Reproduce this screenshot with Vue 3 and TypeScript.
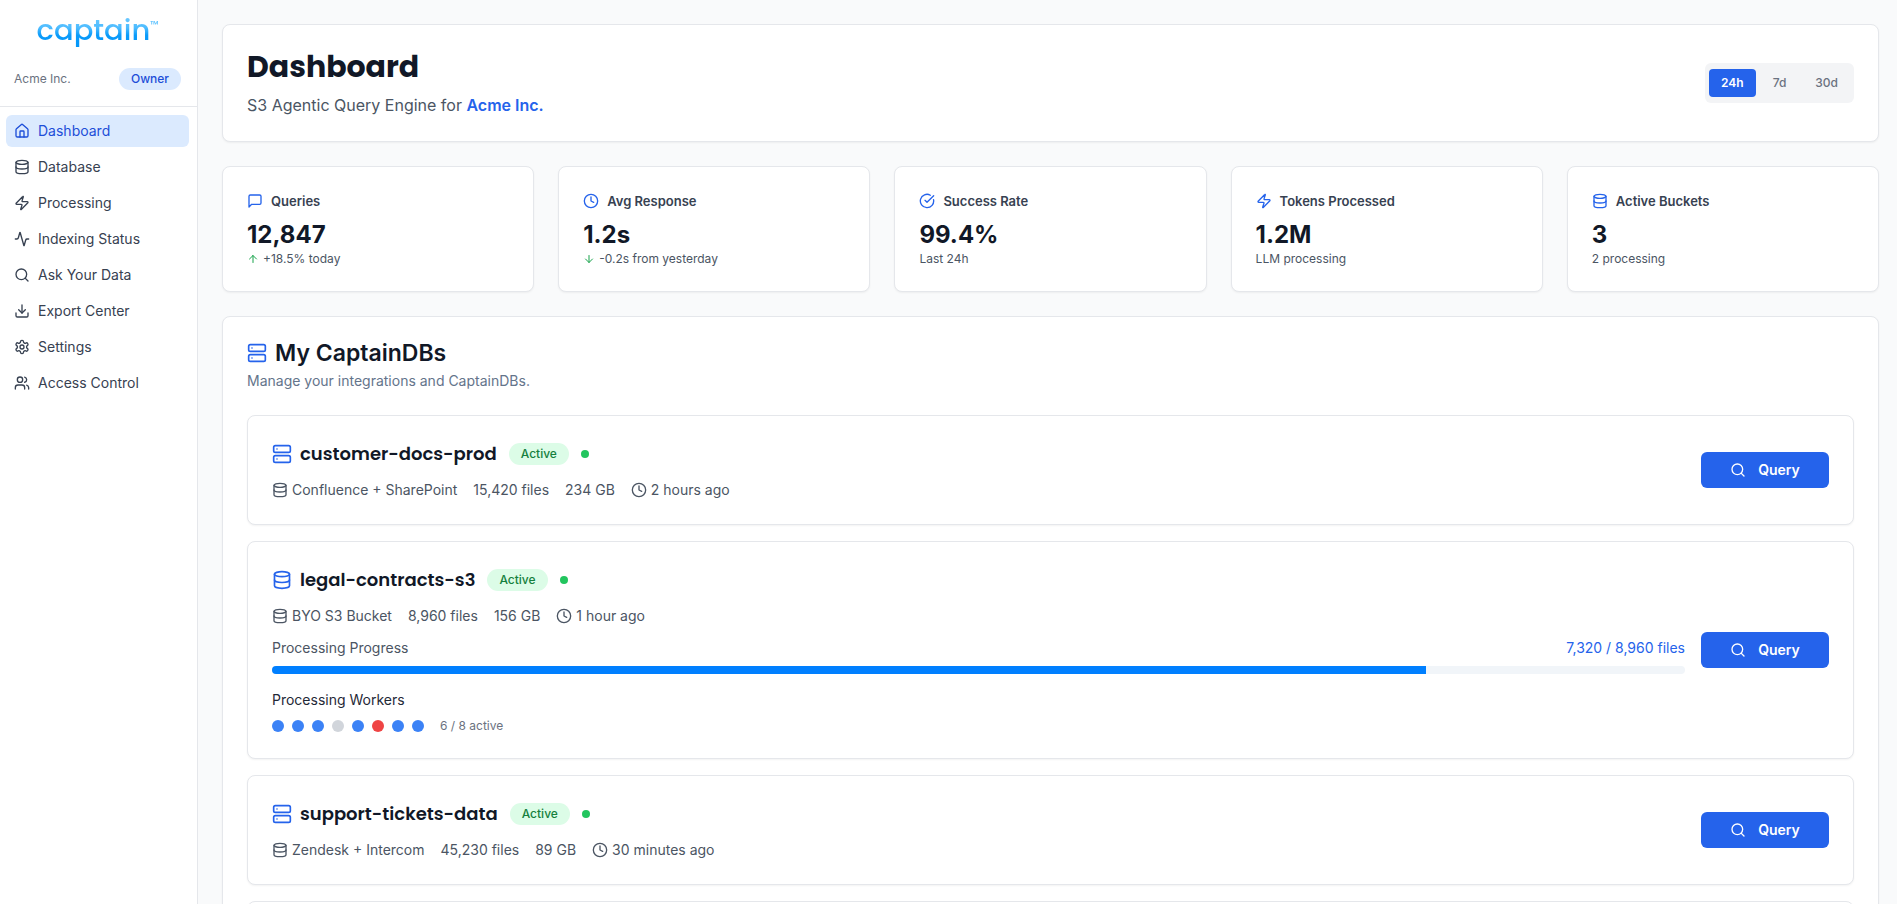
<script setup lang="ts">
import { ref } from 'vue'

type IconName =
  | 'home' | 'database' | 'zap' | 'activity' | 'search' | 'download' | 'settings'
  | 'users' | 'message' | 'clock' | 'check' | 'server' | 'up' | 'down'

const icons: Record<IconName, string[]> = {
  home: [
    'M15 21v-8a1 1 0 0 0-1-1h-4a1 1 0 0 0-1 1v8',
    'M3 10a2 2 0 0 1 .709-1.528l7-5.999a2 2 0 0 1 2.582 0l7 5.999A2 2 0 0 1 21 10v9a2 2 0 0 1-2 2H5a2 2 0 0 1-2-2z',
  ],
  database: [
    'M3 5a9 3 0 1 0 18 0a9 3 0 1 0-18 0',
    'M3 5V19A9 3 0 0 0 21 19V5',
    'M3 12A9 3 0 0 0 21 12',
  ],
  zap: [
    'M4 14a1 1 0 0 1-.78-1.63l9.9-10.2a.5.5 0 0 1 .86.46l-1.92 6.02A1 1 0 0 0 13 10h7a1 1 0 0 1 .78 1.63l-9.9 10.2a.5.5 0 0 1-.86-.46l1.92-6.02A1 1 0 0 0 11 14z',
  ],
  activity: [
    'M22 12h-2.48a2 2 0 0 0-1.93 1.46l-2.35 8.36a.25.25 0 0 1-.48 0L9.24 2.18a.25.25 0 0 0-.48 0l-2.35 8.36A2 2 0 0 1 4.49 12H2',
  ],
  search: ['M3 11a8 8 0 1 0 16 0a8 8 0 1 0-16 0', 'm21 21-4.3-4.3'],
  download: ['M12 15V3', 'M21 15v4a2 2 0 0 1-2 2H5a2 2 0 0 1-2-2v-4', 'm7 10 5 5 5-5'],
  settings: [
    'M12.22 2h-.44a2 2 0 0 0-2 2v.18a2 2 0 0 1-1 1.73l-.43.25a2 2 0 0 1-2 0l-.15-.08a2 2 0 0 0-2.73.73l-.22.38a2 2 0 0 0 .73 2.73l.15.1a2 2 0 0 1 1 1.72v.51a2 2 0 0 1-1 1.74l-.15.09a2 2 0 0 0-.73 2.73l.22.38a2 2 0 0 0 2.73.73l.15-.08a2 2 0 0 1 2 0l.43.25a2 2 0 0 1 1 1.73V20a2 2 0 0 0 2 2h.44a2 2 0 0 0 2-2v-.18a2 2 0 0 1 1-1.73l.43-.25a2 2 0 0 1 2 0l.15.08a2 2 0 0 0 2.73-.73l.22-.39a2 2 0 0 0-.73-2.73l-.15-.08a2 2 0 0 1-1-1.74v-.5a2 2 0 0 1 1-1.74l.15-.09a2 2 0 0 0 .73-2.73l-.22-.38a2 2 0 0 0-2.73-.73l-.15.08a2 2 0 0 1-2 0l-.43-.25a2 2 0 0 1-1-1.73V4a2 2 0 0 0-2-2z',
    'M9 12a3 3 0 1 0 6 0a3 3 0 1 0-6 0',
  ],
  users: [
    'M16 21v-2a4 4 0 0 0-4-4H6a4 4 0 0 0-4 4v2',
    'M5 7a4 4 0 1 0 8 0a4 4 0 1 0-8 0',
    'M22 21v-2a4 4 0 0 0-3-3.87',
    'M16 3.13a4 4 0 0 1 0 7.75',
  ],
  message: ['M21 15a2 2 0 0 1-2 2H7l-4 4V5a2 2 0 0 1 2-2h14a2 2 0 0 1 2 2z'],
  clock: ['M2 12a10 10 0 1 0 20 0a10 10 0 1 0-20 0', 'M12 6v6l4 2'],
  check: ['M21.801 10A10 10 0 1 1 17 3.335', 'm9 11 3 3L22 4'],
  server: [
    'M4 2h16a2 2 0 0 1 2 2v4a2 2 0 0 1-2 2H4a2 2 0 0 1-2-2V4a2 2 0 0 1 2-2z',
    'M4 14h16a2 2 0 0 1 2 2v4a2 2 0 0 1-2 2H4a2 2 0 0 1-2-2v-4a2 2 0 0 1 2-2z',
    'M6 6h.01',
    'M6 18h.01',
  ],
  up: ['m5 12 7-7 7 7', 'M12 19V5'],
  down: ['M12 5v14', 'm19 12-7 7-7-7'],
}

const nav: { label: string; icon: IconName }[] = [
  { label: 'Dashboard', icon: 'home' },
  { label: 'Database', icon: 'database' },
  { label: 'Processing', icon: 'zap' },
  { label: 'Indexing Status', icon: 'activity' },
  { label: 'Ask Your Data', icon: 'search' },
  { label: 'Export Center', icon: 'download' },
  { label: 'Settings', icon: 'settings' },
  { label: 'Access Control', icon: 'users' },
]
const current = ref('Dashboard')

const ranges = ['24h', '7d', '30d']
const range = ref('24h')

const stats: { label: string; icon: IconName; value: string; note: string; trend?: IconName }[] = [
  { label: 'Queries', icon: 'message', value: '12,847', note: '+18.5% today', trend: 'up' },
  { label: 'Avg Response', icon: 'clock', value: '1.2s', note: '-0.2s from yesterday', trend: 'down' },
  { label: 'Success Rate', icon: 'check', value: '99.4%', note: 'Last 24h' },
  { label: 'Tokens Processed', icon: 'zap', value: '1.2M', note: 'LLM processing' },
  { label: 'Active Buckets', icon: 'database', value: '3', note: '2 processing' },
]

type Worker = 'busy' | 'idle' | 'failed'
interface Db {
  name: string
  icon: IconName
  source: string
  files: string
  size: string
  updated: string
  progress?: { done: number; total: number; workers: Worker[] }
}

const dbs: Db[] = [
  { name: 'customer-docs-prod', icon: 'server', source: 'Confluence + SharePoint', files: '15,420 files', size: '234 GB', updated: '2 hours ago' },
  {
    name: 'legal-contracts-s3', icon: 'database', source: 'BYO S3 Bucket', files: '8,960 files', size: '156 GB', updated: '1 hour ago',
    progress: { done: 7320, total: 8960, workers: ['busy', 'busy', 'busy', 'idle', 'busy', 'failed', 'busy', 'busy'] },
  },
  { name: 'support-tickets-data', icon: 'server', source: 'Zendesk + Intercom', files: '45,230 files', size: '89 GB', updated: '30 minutes ago' },
]

const fmt = (n: number) => n.toLocaleString('en-US')
const busy = (w: Worker[]) => w.filter((s) => s === 'busy').length
</script>

<template>
  <div class="layout">
    <aside class="sidebar">
      <div class="brand">
        <a href="#" class="logo">captain<span class="tm">™</span></a>
        <div class="org">
          <span class="org-name">Acme Inc.</span>
          <span class="badge owner">Owner</span>
        </div>
      </div>
      <nav class="nav" aria-label="Main">
        <a
          v-for="n in nav"
          :key="n.label"
          href="#"
          class="nav-item"
          :class="{ active: n.label === current }"
          @click.prevent="current = n.label"
        >
          <svg class="icon" viewBox="0 0 24 24"><path v-for="d in icons[n.icon]" :key="d" :d="d" /></svg>
          {{ n.label }}
        </a>
      </nav>
    </aside>

    <main class="main">
      <header class="card header">
        <div>
          <h1>Dashboard</h1>
          <p class="lead">S3 Agentic Query Engine for <strong>Acme Inc.</strong></p>
        </div>
        <div class="ranges" role="group" aria-label="Time range">
          <button
            v-for="r in ranges"
            :key="r"
            type="button"
            class="range"
            :class="{ active: r === range }"
            :aria-pressed="r === range"
            @click="range = r"
          >{{ r }}</button>
        </div>
      </header>

      <section class="stats" aria-label="Statistics">
        <article v-for="s in stats" :key="s.label" class="card">
          <h2 class="stat-label">
            <svg class="icon blue" viewBox="0 0 24 24"><path v-for="d in icons[s.icon]" :key="d" :d="d" /></svg>
            {{ s.label }}
          </h2>
          <div class="stat-value">{{ s.value }}</div>
          <div class="stat-note">
            <svg v-if="s.trend" class="icon small green" viewBox="0 0 24 24"><path v-for="d in icons[s.trend]" :key="d" :d="d" /></svg>
            {{ s.note }}
          </div>
        </article>
      </section>

      <section class="card">
        <h2 class="section-title">
          <svg class="icon large blue" viewBox="0 0 24 24"><path v-for="d in icons.server" :key="d" :d="d" /></svg>
          My CaptainDBs
        </h2>
        <p class="section-sub">Manage your integrations and CaptainDBs.</p>

        <div class="dbs">
          <article v-for="db in dbs" :key="db.name" class="card db">
            <div class="db-body">
              <div class="db-head">
                <h3 class="db-name">
                  <svg class="icon large blue" viewBox="0 0 24 24"><path v-for="d in icons[db.icon]" :key="d" :d="d" /></svg>
                  {{ db.name }}
                </h3>
                <span class="badge ok">Active</span>
                <span class="status"></span>
              </div>
              <div class="meta">
                <span class="meta-item">
                  <svg class="icon" viewBox="0 0 24 24"><path v-for="d in icons.database" :key="d" :d="d" /></svg>
                  {{ db.source }}
                </span>
                <span>{{ db.files }}</span>
                <span>{{ db.size }}</span>
                <span class="meta-item">
                  <svg class="icon" viewBox="0 0 24 24"><path v-for="d in icons.clock" :key="d" :d="d" /></svg>
                  {{ db.updated }}
                </span>
              </div>
              <template v-if="db.progress">
                <div class="progress-head">
                  <span>Processing Progress</span>
                  <span class="progress-count">{{ fmt(db.progress.done) }} / {{ fmt(db.progress.total) }} files</span>
                </div>
                <div
                  class="track"
                  role="progressbar"
                  aria-label="Processing Progress"
                  :aria-valuenow="db.progress.done"
                  :aria-valuemax="db.progress.total"
                >
                  <div class="fill" :style="{ width: (db.progress.done / db.progress.total) * 100 + '%' }"></div>
                </div>
                <div class="workers-label">Processing Workers</div>
                <div class="workers">
                  <span v-for="(w, i) in db.progress.workers" :key="i" class="worker" :class="w"></span>
                  <span class="workers-count">{{ busy(db.progress.workers) }} / {{ db.progress.workers.length }} active</span>
                </div>
              </template>
            </div>
            <button type="button" class="query">
              <svg class="icon" viewBox="0 0 24 24"><path v-for="d in icons.search" :key="d" :d="d" /></svg>
              Query
            </button>
          </article>
          <article class="card db pending"></article>
        </div>
      </section>
    </main>
  </div>
</template>

<style>
body {
  margin: 0;
  background: #f9fafb;
}
</style>

<style scoped>
.layout {
  display: flex;
  height: 100vh;
  overflow: hidden;
  background: #f9fafb;
  color: #111827;
  font-family: Inter, "Liberation Sans", sans-serif;
  font-size: 14px;
  line-height: 20px;
}
.layout *,
.layout {
  box-sizing: border-box;
}
h1, h2, h3, p {
  margin: 0;
}
button {
  border: 0;
  font: inherit;
  cursor: pointer;
}
a {
  text-decoration: none;
}

.icon {
  width: 16px;
  height: 16px;
  flex: none;
  fill: none;
  stroke: currentColor;
  stroke-width: 2;
  stroke-linecap: round;
  stroke-linejoin: round;
}
.icon.small {
  width: 12px;
  height: 12px;
}
.icon.large {
  width: 20px;
  height: 20px;
}
.blue {
  color: #2563eb;
}
.green {
  color: #16a34a;
}

.badge {
  padding: 3px 12px;
  border-radius: 12px;
  font-size: 12px;
  line-height: 16px;
  font-weight: 500;
}
.owner {
  background: #dbeafe;
  color: #1d4ed8;
}
.ok {
  background: #dcfce7;
  color: #15803d;
}

.sidebar {
  width: 198px;
  flex: none;
  background: #fff;
  border-right: 1px solid #e5e7eb;
}
.brand {
  display: flex;
  flex-direction: column;
  height: 107px;
  padding: 8px 16px 16px 14px;
  border-bottom: 1px solid #e5e7eb;
}
.logo {
  align-self: center;
  font-family: Poppins, Inter, sans-serif;
  font-size: 29px;
  line-height: 44px;
  font-weight: 500;
  color: transparent;
  background: linear-gradient(#66c6ff 25%, #4dbcff 45%, #0a9bfa 62%, #0094f8);
  -webkit-background-clip: text;
  background-clip: text;
}
.tm {
  font-size: 10px;
  line-height: 12px;
  vertical-align: 12px;
}
.org {
  display: flex;
  align-items: center;
  justify-content: space-between;
  margin-top: auto;
}
.org-name {
  font-size: 12px;
  color: #6b7280;
}
.nav {
  display: flex;
  flex-direction: column;
  gap: 4px;
  padding: 8px 8px 8px 6px;
}
.nav-item {
  display: flex;
  align-items: center;
  gap: 8px;
  padding: 6px 8px;
  border-radius: 6px;
  color: #374151;
}
.nav-item.active {
  background: #dbeafe;
  color: #1d4ed8;
}

.main {
  flex: 1;
  min-width: 0;
  display: flex;
  flex-direction: column;
  gap: 24px;
  padding: 24px 18px 24px 24px;
  overflow-y: auto;
  scrollbar-width: none;
}
.card {
  padding: 24px;
  flex: none;
  background: #fff;
  border: 1px solid #e5e7eb;
  border-radius: 8px;
  box-shadow: 0 1px 2px rgba(0, 0, 0, 0.05);
}
.header {
  display: flex;
  align-items: center;
  justify-content: space-between;
}
h1 {
  font-family: Poppins, Inter, sans-serif;
  font-size: 30px;
  line-height: 36px;
  font-weight: 700;
}
.lead {
  margin-top: 8px;
  font-size: 16px;
  line-height: 24px;
  color: #4b5563;
}
.lead strong {
  font-weight: 600;
  color: #2563eb;
}
.ranges {
  display: flex;
  align-items: center;
  gap: 5px;
  height: 40px;
  padding: 4px;
  border-radius: 6px;
  background: #f3f4f6;
}
.range {
  height: 28px;
  padding: 0 12px;
  border-radius: 4px;
  background: transparent;
  color: #6b7280;
  font-size: 12px;
  font-weight: 500;
}
.range.active {
  background: #2563eb;
  color: #fff;
  font-weight: 600;
}

.stats {
  display: grid;
  grid-template-columns: repeat(5, 1fr);
  gap: 24px;
}
.stat-label {
  display: flex;
  align-items: center;
  gap: 8px;
  font-size: 13px;
  line-height: 20px;
  font-weight: 600;
  color: #374151;
}
.stat-value {
  margin-top: 8px;
  font-size: 24px;
  line-height: 32px;
  font-weight: 700;
}
.stat-note {
  display: flex;
  align-items: center;
  gap: 4px;
  font-size: 12px;
  line-height: 16px;
  color: #4b5563;
}

.section-title {
  display: flex;
  align-items: center;
  gap: 8px;
  font-size: 23px;
  line-height: 24px;
  font-weight: 600;
}
.section-sub {
  margin-top: 6px;
  color: #64748b;
}
.dbs {
  display: flex;
  flex-direction: column;
  gap: 16px;
  margin-top: 24px;
}
.db {
  display: flex;
  align-items: center;
  gap: 16px;
}
.pending {
  min-height: 110px;
}
.db-body {
  flex: 1;
  min-width: 0;
}
.db-head {
  display: flex;
  align-items: center;
  gap: 12px;
}
.db-name {
  display: flex;
  align-items: center;
  gap: 8px;
  font-family: Poppins, Inter, sans-serif;
  font-size: 18px;
  line-height: 28px;
  font-weight: 600;
}
.status {
  width: 8px;
  height: 8px;
  border-radius: 50%;
  background: #22c55e;
}
.meta {
  display: flex;
  gap: 16px;
  margin-top: 12px;
  color: #4b5563;
}
.meta-item {
  display: flex;
  align-items: center;
  gap: 4px;
}
.progress-head {
  display: flex;
  justify-content: space-between;
  margin-top: 12px;
  color: #4b5563;
}
.progress-count {
  color: #2563eb;
}
.track {
  height: 8px;
  margin-top: 8px;
  border-radius: 4px;
  background: #f1f5f9;
  overflow: hidden;
}
.fill {
  height: 100%;
  background: #007fff;
}
.workers-label {
  margin-top: 16px;
  color: #1f2937;
}
.workers {
  display: flex;
  align-items: center;
  gap: 8px;
  margin-top: 8px;
}
.worker {
  width: 12px;
  height: 12px;
  border-radius: 50%;
}
.busy {
  background: #3b82f6;
}
.idle {
  background: #d1d5db;
}
.failed {
  background: #ef4444;
}
.workers-count {
  margin-left: 8px;
  font-size: 12px;
  line-height: 16px;
  color: #6b7280;
}
.query {
  display: flex;
  align-items: center;
  justify-content: center;
  gap: 12px;
  width: 128px;
  height: 36px;
  flex: none;
  padding: 0;
  border-radius: 6px;
  background: #2563eb;
  color: #fff;
  font-weight: 600;
}
</style>
